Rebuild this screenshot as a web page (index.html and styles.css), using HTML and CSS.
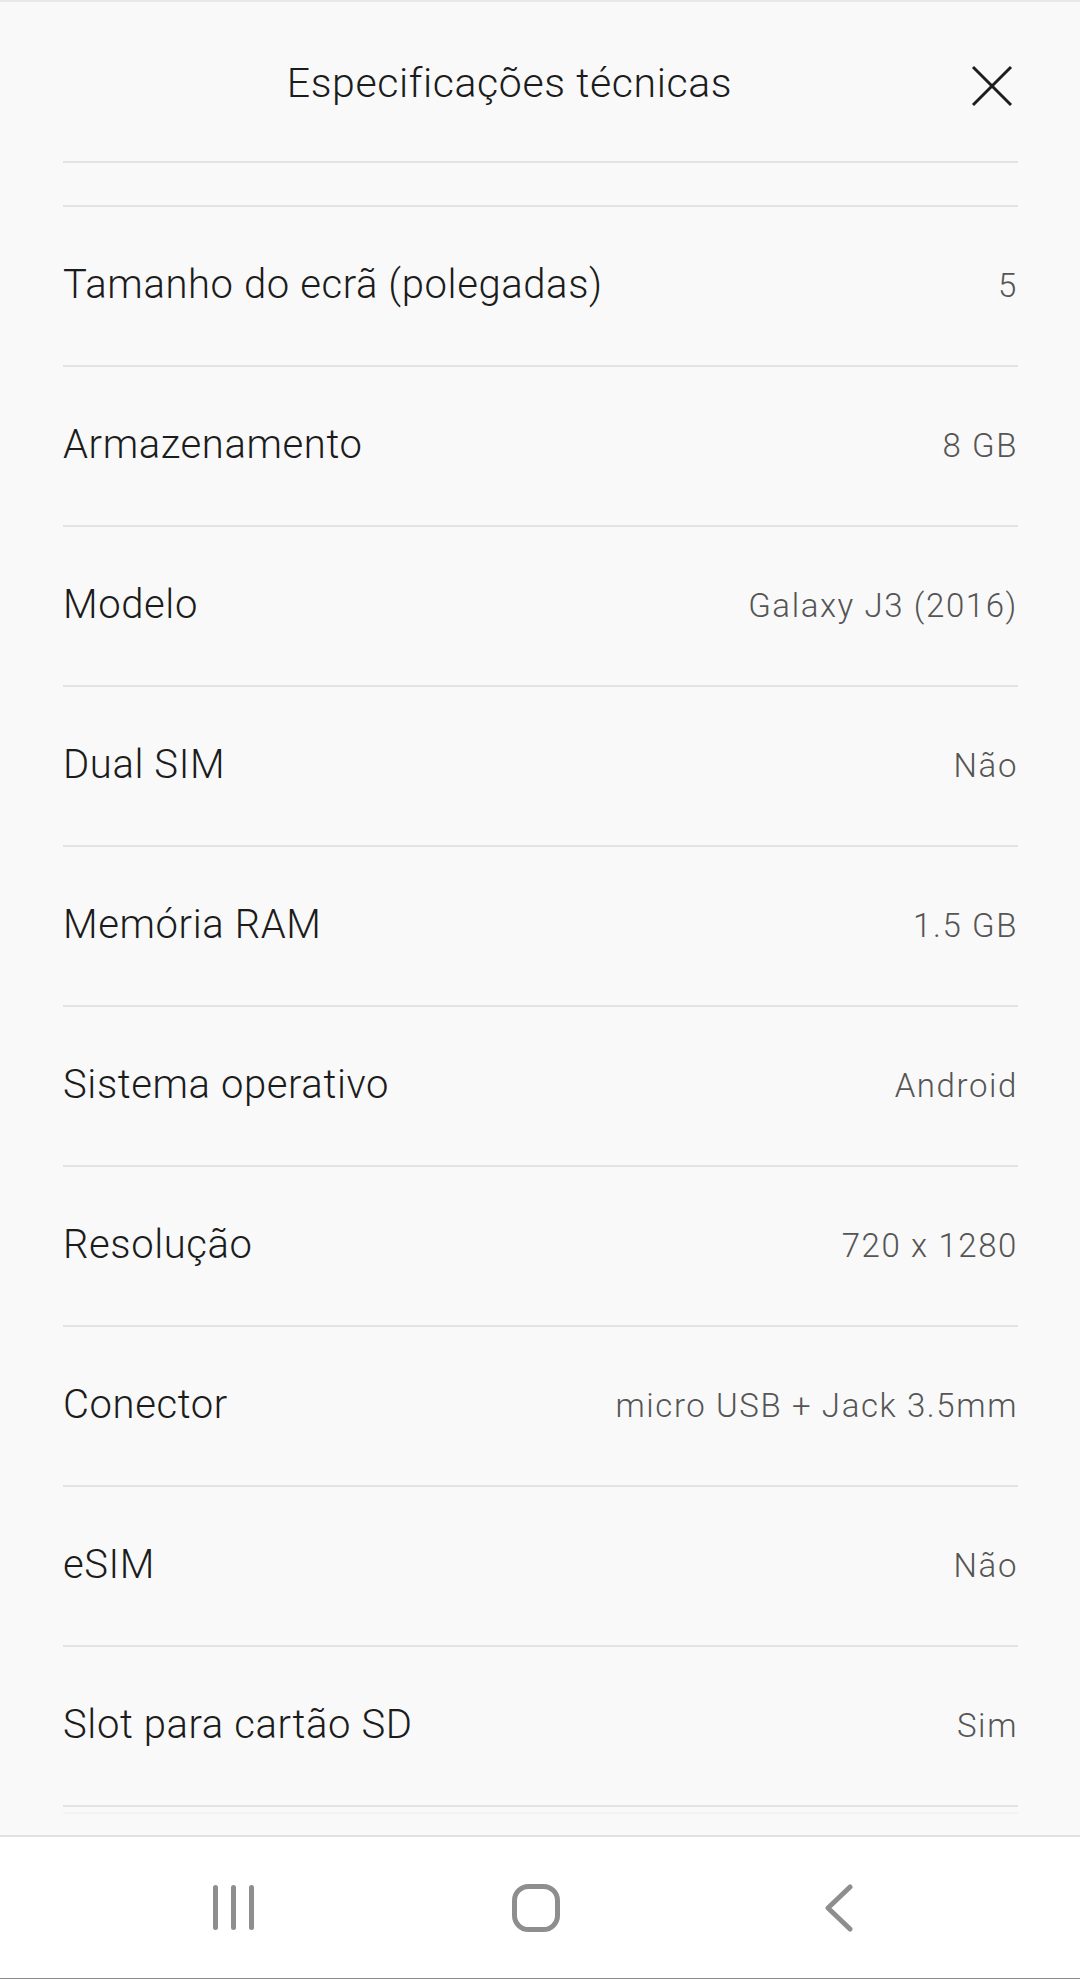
FILE: index.html
```html
<!DOCTYPE html>
<html lang="pt">
<head>
    <meta charset="UTF-8">
    <meta name="viewport" content="width=device-width, initial-scale=1.0">
    <title>Especificações técnicas</title>
    <link rel="stylesheet" href="styles.css">
</head>
<body>

    <div class="screen">
        <!-- Sheet header -->
        <header class="sheet-head">
            <h1 class="sheet-title">Especificações técnicas</h1>
            <button class="close-btn" aria-label="Fechar">
                <svg width="42" height="42" viewBox="0 0 42 42">
                    <line x1="2" y1="2" x2="40" y2="40" />
                    <line x1="40" y1="2" x2="2" y2="40" />
                </svg>
            </button>
        </header>

        <!-- Spec list (scrolled a little) -->
        <ul class="spec-list">
            <li class="spec-row spec-row--cut"></li>
            <li class="spec-row"><span class="spec-label">Tamanho do ecrã (polegadas)</span><span class="spec-value">5</span></li>
            <li class="spec-row"><span class="spec-label">Armazenamento</span><span class="spec-value">8 GB</span></li>
            <li class="spec-row"><span class="spec-label">Modelo</span><span class="spec-value">Galaxy J3 (2016)</span></li>
            <li class="spec-row"><span class="spec-label">Dual SIM</span><span class="spec-value">Não</span></li>
            <li class="spec-row"><span class="spec-label">Memória RAM</span><span class="spec-value">1.5 GB</span></li>
            <li class="spec-row"><span class="spec-label">Sistema operativo</span><span class="spec-value">Android</span></li>
            <li class="spec-row"><span class="spec-label">Resolução</span><span class="spec-value">720 x 1280</span></li>
            <li class="spec-row"><span class="spec-label">Conector</span><span class="spec-value">micro USB + Jack 3.5mm</span></li>
            <li class="spec-row"><span class="spec-label">eSIM</span><span class="spec-value">Não</span></li>
            <li class="spec-row"><span class="spec-label">Slot para cartão SD</span><span class="spec-value">Sim</span></li>
            <li class="spec-row spec-row--faint"></li>
        </ul>

        <!-- Android navigation bar -->
        <nav class="nav-bar">
            <span class="nav-item">
                <svg width="42" height="45" viewBox="0 0 42 45">
                    <rect x="0" y="0" width="5" height="45" rx="2.5" />
                    <rect x="18" y="0" width="5" height="45" rx="2.5" />
                    <rect x="36" y="0" width="5" height="45" rx="2.5" />
                </svg>
            </span>
            <span class="nav-item">
                <svg width="48" height="48" viewBox="0 0 48 48">
                    <rect class="stroke" x="2.5" y="2.5" width="43" height="43" rx="14" />
                </svg>
            </span>
            <span class="nav-item">
                <svg width="32" height="48" viewBox="0 0 32 48">
                    <polyline class="stroke" points="28,3 6,24 28,45" />
                </svg>
            </span>
        </nav>
    </div>

</body>
</html>
```

FILE: styles.css
```css
/* Base */
body {
    margin: 0;
    background: #f9f9f9;
    font-family: Roboto, "Noto Sans", "Liberation Sans", sans-serif;
    color: #232323;
}

.screen {
    display: flex;
    flex-direction: column;
    height: 1979px;
    border-top: 2px solid #e8e8e8;
    box-sizing: border-box;
    overflow: hidden;
}

/* Header */
.sheet-head {
    display: flex;
    align-items: center;
    height: 157px;
    margin: 0 62px 0 63px;
    padding-top: 2px;
    border-bottom: 2px solid #e3e3e3;
}

.sheet-title {
    flex: 1;
    margin: 0;
    text-align: center;
    font-size: 41px;
    font-weight: 300;
    letter-spacing: 0.6px;
    color: #1c1c1c;
}

.close-btn {
    display: flex;
    justify-content: flex-end;
    align-items: center;
    width: 62px;
    padding: 0 5px 0 0;
    margin-top: 6px;
    border: none;
    background: transparent;
}

.close-btn line {
    stroke: #1e1e1e;
    stroke-width: 3;
}

/* Spec rows */
.spec-list {
    flex: 1;
    margin: 0;
    padding: 0 62px 0 63px;
    list-style: none;
    overflow: hidden;
}

.spec-row {
    display: flex;
    justify-content: space-between;
    align-items: center;
    height: 158px;
    border-bottom: 2px solid #e3e3e3;
}

.spec-row--cut {
    height: 42px;
}

.spec-row--faint {
    height: 5px;
    border-bottom-color: #f3f3f3;
}

.spec-label {
    font-size: 40px;
    font-weight: 300;
    letter-spacing: 0.6px;
    color: #1c1c1c;
    margin-top: -4px;
}

.spec-value {
    font-size: 33px;
    font-weight: 300;
    letter-spacing: 1.6px;
    color: #555;
    margin-top: -2px;
}

/* Navigation bar */
.nav-bar {
    display: flex;
    justify-content: center;
    align-items: center;
    height: 141px;
    flex-shrink: 0;
    padding-right: 8px;
    background: #fff;
    border-top: 2px solid #e2e2e2;
    border-bottom: 1px solid #8a8a8a;
}

.nav-item {
    display: flex;
    justify-content: center;
    width: 302px;
}

.nav-item svg {
    fill: #8e8e8e;
}

.nav-item .stroke {
    fill: none;
    stroke: #8e8e8e;
    stroke-width: 5;
    stroke-linecap: round;
    stroke-linejoin: round;
}
```
